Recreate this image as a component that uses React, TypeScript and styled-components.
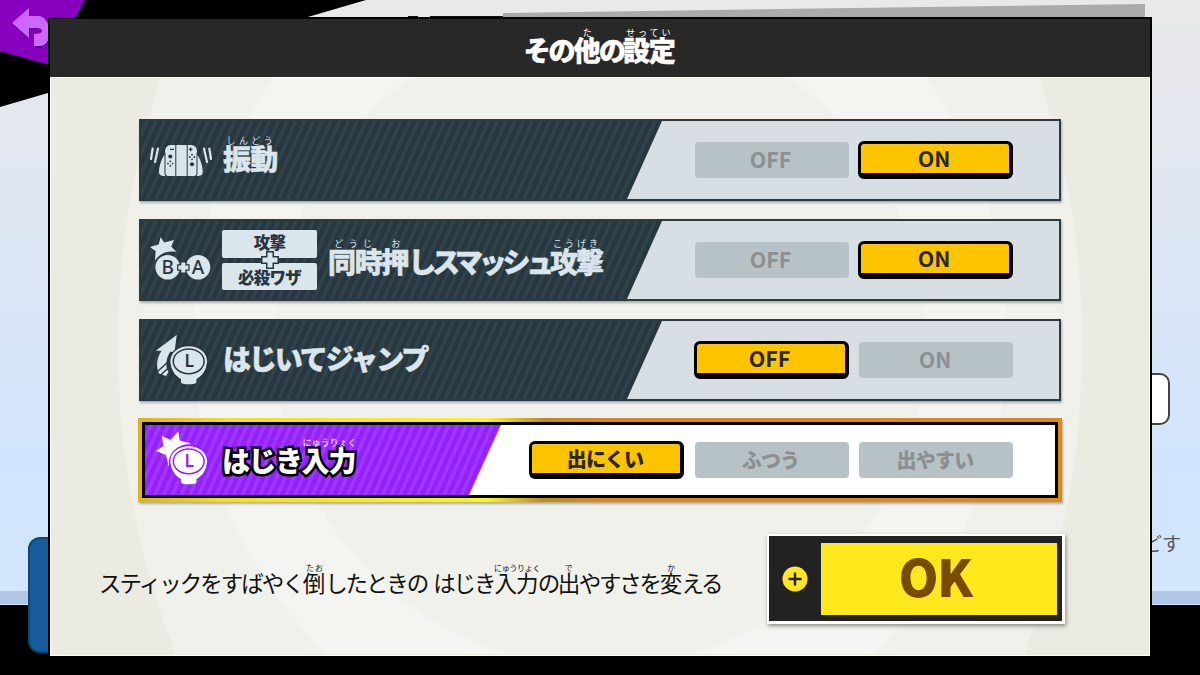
import React from 'react';
import styled, { createGlobalStyle, css } from 'styled-components';

// types
type Piece = {
    text: string;
    pitch: number;
    ruby?: string;
    rubyPitch?: number;
    gap?: number;
};

type Setting = {
    icon: React.ReactNode;
    label: Piece[];
    options: string[];
    selected: number;
    tags?: string[];
    active?: boolean;
    shift?: number;
};

// local components
const GlobalStyle = createGlobalStyle`
    body {
        margin: 0;
        background: #000000;
        font-family: 'Noto Sans CJK JP', sans-serif;
    }
`;

const Screen = styled.div`
    position: relative;
    width: 1200px;
    height: 675px;
    overflow: hidden;
    box-sizing: border-box;
    padding: 17px 48px;
    background: #000000;
`;

const Scene = styled.svg`
    position: absolute;
    top: 0;
    left: 0;
`;

const Dialog = styled.div`
    position: relative;
    box-sizing: border-box;
    height: 640px;
    border: 2px solid #000000;
    border-bottom-width: 1px;
    display: flex;
    flex-direction: column;
`;

const Header = styled.header`
    height: 58px;
    flex: none;
    display: flex;
    justify-content: center;
    align-items: center;
    padding: 2px 2px 0 0;
    box-sizing: border-box;
    background: #282828;
    color: #ffffff;
`;

const Body = styled.div`
    position: relative;
    flex: 1;
    box-sizing: border-box;
    padding-top: 41px;
    border: 1px solid #ffffff;
    background: #ebebe2;
`;

const Rings = styled.svg`
    position: absolute;
    top: 0;
    left: 0;
`;

const List = styled.div`
    position: relative;
    display: flex;
    flex-direction: column;
    gap: 18px;
    padding: 0 88px;
`;

const SettingRow = styled.div<{ $active?: boolean }>`
    display: flex;
    height: 82px;
    box-sizing: border-box;
    border: 2px solid #2b3a43;
    background: #d7dfe4;
    box-shadow: 1px 2px 2px rgba(110, 120, 120, 0.55);

    ${(p) => p.$active && css`
        height: 84px;
        margin: -1px;
        padding: 4px;
        border: 0;
        background: linear-gradient(90deg, #dfb313 0, #f5e018 90px, #fff31c 350px, #c08a18 405px, #dc861b 460px, #df861c 100%);
    `}
`;

const Inner = styled.div<{ $active?: boolean }>`
    flex: 1;
    display: flex;
    align-items: center;
    justify-content: space-between;

    ${(p) => p.$active && css`
        border: 3px solid #000000;
        background: #ffffff;
    `}
`;

const Panel = styled.div<{ $active?: boolean }>`
    height: 100%;
    width: ${(p) => (p.$active ? 356 : 521)}px;
    display: flex;
    align-items: center;
    box-sizing: border-box;
    clip-path: polygon(0 0, 100% 0, calc(100% - ${(p) => (p.$active ? 32 : 35)}px) 100%, 0 100%);
    color: ${(p) => (p.$active ? '#ffffff' : '#dbe5ec')};
    --panel: ${(p) => (p.$active ? '#951fff' : '#28363f')};
    background: ${(p) => p.$active
        ? 'repeating-linear-gradient(114deg, #951fff 0 3px, #9f39ff 4.5px 6.5px, #951fff 8px)'
        : 'repeating-linear-gradient(114deg, #28363f 0 3px, #30424a 4.5px 6.5px, #28363f 8px)'};
`;

const Icon = styled.svg<{ $active?: boolean }>`
    flex: none;
    width: 78px;
    height: 78px;
    margin-left: ${(p) => (p.$active ? -4 : 0)}px;
    margin-right: 4px;
    fill: currentColor;
    font-family: 'Noto Sans', sans-serif;
`;

const Line = styled.div<{ $size: number; $weight: number; $outline?: boolean; $shift?: number }>`
    display: flex;
    white-space: pre;
    font-size: ${(p) => p.$size}px;
    font-weight: ${(p) => p.$weight};
    line-height: ${(p) => p.$size + 4}px;
    margin-top: ${(p) => p.$shift || 0}px;
    -webkit-text-stroke: ${(p) => (p.$weight > 700 ? 0.5 : 0)}px currentColor;

    ${(p) => p.$outline && css`
        margin-left: -1px;
        -webkit-text-stroke: 5px #000000;
        paint-order: stroke fill;
        text-shadow: 1px 2px 0 #000000;
    `}
`;

const Word = styled.span<{ $spacing: number; $gap?: number }>`
    position: relative;
    letter-spacing: ${(p) => p.$spacing}px;
    margin-left: ${(p) => p.$gap || 0}px;
`;

const Furigana = styled.span<{ $spacing: number; $lift: number; $size: number }>`
    position: absolute;
    left: calc(50% + 1px);
    top: ${(p) => p.$lift}px;
    transform: translateX(-50%);
    font-size: ${(p) => p.$size}px;
    font-weight: 400;
    line-height: 10px;
    letter-spacing: ${(p) => p.$spacing}px;
    -webkit-text-stroke: 0;
    text-shadow: none;
`;

const Tags = styled.div`
    position: relative;
    display: flex;
    flex-direction: column;
    gap: 5px;
    width: 95px;
    margin: 0 11px 0 -1px;
`;

const Tag = styled.div`
    height: 27.5px;
    border-radius: 2px;
    background: #dbe5ec;
    color: #28363f;
    font-size: 16.5px;
    font-weight: 900;
    line-height: 25px;
    letter-spacing: -0.7px;
    text-align: center;

    & + & {
        line-height: 29px;
    }
`;

const TagPlus = styled.svg`
    position: absolute;
    left: 37.5px;
    top: 20px;
`;

const Options = styled.div<{ $active?: boolean }>`
    display: flex;
    align-items: center;
    gap: 10.5px;
    padding-right: ${(p) => (p.$active ? 42 : 46)}px;
`;

const Option = styled.button<{ $selected: boolean; $kana: boolean }>`
    box-sizing: border-box;
    width: 154px;
    height: 36px;
    padding: 0 2px ${(p) => (p.$kana ? 0 : 2)}px 0;
    border: 0;
    border-radius: 4px;
    background: #b7c2c7;
    color: #8d8f90;
    font-family: inherit;
    font-size: ${(p) => (p.$kana ? 20 : 21.5)}px;
    font-weight: ${(p) => (p.$kana ? 900 : 700)};
    line-height: 30px;
    letter-spacing: ${(p) => (p.$kana ? -0.8 : 0)}px;

    ${(p) => p.$selected && css`
        width: 155px;
        height: 38px;
        margin: 0 0 0 -1px;
        border: solid #000000;
        border-width: 3px 4px 6px 3px;
        border-radius: 6px;
        background: #ffc400;
        color: #282828;
        line-height: 26px;
    `}
`;

const Footer = styled.footer`
    position: relative;
    display: flex;
    justify-content: space-between;
    padding: 33px 84px 0 48px;
`;

const Message = styled.div`
    padding-top: 35px;
    color: #111111;
`;

const OkButton = styled.button`
    display: flex;
    align-items: stretch;
    box-sizing: border-box;
    width: 298px;
    height: 90px;
    padding: 0;
    border: solid #ffffff;
    border-width: 2px 3px 3px 2px;
    background: #222222;
    box-shadow: 1px 2px 4px rgba(70, 70, 60, 0.6);
    font-family: inherit;
`;

const OkKey = styled.span`
    width: 52px;
    display: flex;
    align-items: center;
    justify-content: center;
`;

const OkText = styled.span`
    flex: 1;
    margin: 7px 5px 6px 0;
    padding-right: 8px;
    background: #ffe91c;
    color: #784b00;
    font-size: 51px;
    font-weight: 900;
    line-height: 64px;
    letter-spacing: -1.5px;
`;

const VibrationIcon = () => (
    <Icon viewBox='0 0 78 78'>
        <path d='M11.7 27.5 10 38M17 27.5 14 41M63 27.5 66 41M68.3 27.5 70 38' stroke='currentColor' strokeWidth='2.2' strokeLinecap='round' />
        <path d='M24 33c-4 5-6 13-6 18 0 3 2 4 6 4zM55.7 33c4 5 6 13 6 18 0 3-2 4-6 4z' />
        <path d='M30 24h20c4 0 6 3 6 7v21c0 2-1 3-3 3H27c-2 0-3-1-3-3V31c0-4 2-7 6-7z' />
        <path d='M34.8 24v31M46.2 24v31M24 32v20c0 2 .5 3 2 3M56 32v20c0 2-.5 3-2 3' fill='none' stroke='var(--panel)' strokeWidth='1' />
        <g fill='var(--panel)'>
            <path d='M29 27.8h4v1.2h-4zM47.8 27.8h3.6v1.2h-3.6zM49 26.6h1.2v3.6H49z' />
            <circle cx='29.3' cy='35.5' r='2' />
            <circle cx='51' cy='43.3' r='2' />
            <circle cx='29.3' cy='40.3' r='.9' />
            <circle cx='29.3' cy='44.9' r='.9' />
            <circle cx='27' cy='42.6' r='.9' />
            <circle cx='31.6' cy='42.6' r='.9' />
            <circle cx='51' cy='33.7' r='.9' />
            <circle cx='51' cy='38.3' r='.9' />
            <circle cx='48.7' cy='36' r='.9' />
            <circle cx='53.3' cy='36' r='.9' />
        </g>
    </Icon>
);

const ComboIcon = () => (
    <Icon viewBox='0 0 78 78'>
        <path d='M19.7 16 23 21.5 33 19l-2.8 6.500L35.500 31C27 29.500 19 32 14 39.500l.6-9.500L9 26l8.600-2.500z' />
        <circle cx='26.7' cy='46.3' r='12.3' />
        <circle cx='57' cy='46.3' r='12.3' />
        <path d='M40.3 41.5h4v3h3v4h-3v3h-4v-3h-3v-4h3z' stroke='var(--panel)' strokeWidth='2.6' paintOrder='stroke' />
        <g fill='var(--panel)' fontSize='19' fontWeight='500' textAnchor='middle'>
            <text x='26.7' y='53'>B</text>
            <text x='57' y='53'>A</text>
        </g>
    </Icon>
);

const Stick = () => (
    <>
        <ellipse cx='47.7' cy='42.3' rx='20' ry='19' fill='var(--panel)' />
        <ellipse cx='47.7' cy='40.2' rx='18.4' ry='15' />
        <path d='M30 45c2 7 6 11 10 13v3c0 1.5 3 2.3 7.7 2.3s7.7-.8 7.7-2.3v-3c4-2 8-6 10-13z' />
        <ellipse cx='47.7' cy='40.3' rx='15.4' ry='12.4' fill='none' stroke='var(--panel)' strokeWidth='1.5' />
        <text x='48.4' y='46.3' fill='var(--panel)' fontSize='17.5' fontWeight='600' textAnchor='middle'>L</text>
    </>
);

const FlickJumpIcon = () => (
    <Icon viewBox='0 0 78 78'>
        <path d='M35.7 14 14.7 29.7l6 .1C15.5 37 14.8 46 18 52.5l7 2.5 2.5-4C24 45 25 37 29.5 30.5l4 1.5z' />
        <path d='M16.5 50.5 27 41M18 55.5 29 45.5' stroke='var(--panel)' strokeWidth='1.4' />
        <Stick />
    </Icon>
);

const FlickIcon = () => (
    <Icon viewBox='0 0 78 78' $active>
        <path d='m37.3 10 1.4 9.500L50 22.500 34 36l-6.500 9-2.500-11-10-4 7.300-5L21 15l8.700 4z' />
        <Stick />
    </Icon>
);

const Ruby = (props: {
    pieces: Piece[];
    size: number;
    weight: number;
    lift: number;
    rubySize?: number;
    outline?: boolean;
    shift?: number;
}) => {
    const { pieces, size, weight, lift, rubySize = 9, outline, shift } = props;
    return (
        <Line $size={size} $weight={weight} $outline={outline} $shift={shift}>
            {pieces.map((piece, i) => (
                <Word key={i} $spacing={piece.pitch - size} $gap={piece.gap}>
                    {piece.text}
                    {piece.ruby && (
                        <Furigana $size={rubySize} $lift={lift} $spacing={(piece.rubyPitch || 9) - rubySize}>
                            {piece.ruby}
                        </Furigana>
                    )}
                </Word>
            ))}
        </Line>
    );
};

// data
const title: Piece[] = [
    { text: 'その', pitch: 24.9 },
    { text: '他', pitch: 25.5, ruby: 'た' },
    { text: 'の', pitch: 24 },
    { text: '設定', pitch: 25.7, ruby: 'せってい', rubyPitch: 12 }
];

const settings: Setting[] = [
    {
        icon: <VibrationIcon />,
        label: [{ text: '振動', pitch: 27.3, ruby: 'しんどう', rubyPitch: 12.5 }],
        options: ['OFF', 'ON'],
        selected: 1,
        shift: -4
    },
    {
        icon: <ComboIcon />,
        tags: ['攻撃', '必殺ワザ'],
        label: [
            { text: '同時', pitch: 26.8, ruby: 'どうじ', rubyPitch: 14.3 },
            { text: '押', pitch: 26.5, ruby: 'お' },
            { text: 'しスマッシュ', pitch: 23.8 },
            { text: '攻撃', pitch: 26, ruby: 'こうげき', rubyPitch: 12 }
        ],
        options: ['OFF', 'ON'],
        selected: 1,
        shift: 1
    },
    {
        icon: <FlickJumpIcon />,
        label: [{ text: 'はじいてジャンプ', pitch: 25.9 }],
        options: ['OFF', 'ON'],
        selected: 0,
        shift: -5
    },
    {
        icon: <FlickIcon />,
        label: [
            { text: 'はじき', pitch: 26.5 },
            { text: '入力', pitch: 27, ruby: 'にゅうりょく', rubyPitch: 9 }
        ],
        options: ['出にくい', 'ふつう', '出やすい'],
        selected: 0,
        active: true,
        shift: 0
    }
];

const message: Piece[] = [
    { text: 'スティックをすばやく', pitch: 20.5 },
    { text: '倒', pitch: 22.5, ruby: 'たお' },
    { text: 'したときの', pitch: 20.4 },
    { text: 'はじき', pitch: 20.4, gap: 6 },
    { text: '入力', pitch: 21.7, ruby: 'にゅうりょく', rubyPitch: 7.7 },
    { text: 'の', pitch: 20 },
    { text: '出', pitch: 21, ruby: 'で' },
    { text: 'やすさを', pitch: 20.2 },
    { text: '変', pitch: 22, ruby: 'か' },
    { text: 'える', pitch: 20 }
];

// export
export default () => (
    <>
        <GlobalStyle />
        <Screen>
            <Scene width='1200' height='675' viewBox='0 0 1200 675'>
                <defs>
                    <linearGradient id='sky' x1='0' y1='0' x2='0' y2='1'>
                        <stop offset='0' stopColor='#e9e9e9' />
                        <stop offset='.25' stopColor='#e2e7f0' />
                        <stop offset='.75' stopColor='#d2e4fd' />
                        <stop offset='1' stopColor='#d4e5fd' />
                    </linearGradient>
                </defs>
                <path d='M0 0H1200V605H0z' fill='url(#sky)' />
                <path d='M0 591H1200V604H0z' fill='#b0c8e5' />
                <path d='M0 0H366L0 107z' fill='#000000' />
                <path d='M503 17V13L1145 4V17z' fill='#ababab' />
                <path d='M408 17V16H418V17zM430 17V16H503V17z' fill='#111111' />
                <path d='M0 0H85L50 65L0 51z' fill='#8700bd' />
                <path d='M13 25 30 10v8h9c13 0 14 30 1 30h-5V36c5 0 8-1 8-4s-2-3-6-3h-7v10z' fill='#5c0085' />
                <path d='M12 23 29 8v8h9c14 0 16 30 2 30h-6V34c5 0 8-1 8-3s-2-3-6-3h-7v10z' fill='#cc67ff' />
                <rect x='29' y='538' width='60' height='114' rx='11' fill='#165c9c' stroke='#0c4a70' strokeWidth='2' />
                <rect x='1110' y='374' width='59' height='50' rx='9' fill='#ffffff' stroke='#444444' strokeWidth='2' />
                <text x='1143' y='551' fontSize='19' fill='#555555'>どす</text>
            </Scene>
            <Dialog>
                <Header>
                    <Ruby pieces={title} size={27} weight={900} lift={-6} />
                </Header>
                <Body>
                    <Rings width='1098' height='576' viewBox='51 78 1098 576'>
                        <ellipse cx='600' cy='345' rx='482' ry='650' fill='#f0f1eb' />
                        <ellipse cx='600' cy='335' rx='407' ry='430' fill='#f4f5f1' />
                        <circle cx='600' cy='342' r='325' fill='#f0f1eb' />
                    </Rings>
                    <List>
                        {settings.map((item, i) => (
                            <SettingRow key={i} $active={item.active}>
                                <Inner $active={item.active}>
                                    <Panel $active={item.active}>
                                        {item.icon}
                                        {item.tags && (
                                            <Tags>
                                                {item.tags.map((tag) => <Tag key={tag}>{tag}</Tag>)}
                                                <TagPlus width='20' height='20'>
                                                    <path d='M7.5 2.5h5v5h5v5h-5v5h-5v-5h-5v-5h5z' fill='#dbe5ec' stroke='#28363f' strokeWidth='3' paintOrder='stroke' />
                                                </TagPlus>
                                            </Tags>
                                        )}
                                        <Ruby
                                            pieces={item.label}
                                            size={28}
                                            weight={900}
                                            lift={-6}
                                            outline={item.active}
                                            shift={item.shift}
                                        />
                                    </Panel>
                                    <Options $active={item.active}>
                                        {item.options.map((option, n) => (
                                            <Option key={option} $selected={n === item.selected} $kana={item.options.length > 2}>
                                                {option}
                                            </Option>
                                        ))}
                                    </Options>
                                </Inner>
                            </SettingRow>
                        ))}
                    </List>
                    <Footer>
                        <Message>
                            <Ruby pieces={message} size={22.5} weight={400} lift={-6} rubySize={8} />
                        </Message>
                        <OkButton>
                            <OkKey>
                                <svg width='26' height='26'>
                                    <circle cx='13' cy='13' r='12.5' fill='#ffe91c' />
                                    <path d='M6.5 13h13M13 6.5v13' stroke='#222222' strokeWidth='2.4' />
                                </svg>
                            </OkKey>
                            <OkText>OK</OkText>
                        </OkButton>
                    </Footer>
                </Body>
            </Dialog>
        </Screen>
    </>
);
